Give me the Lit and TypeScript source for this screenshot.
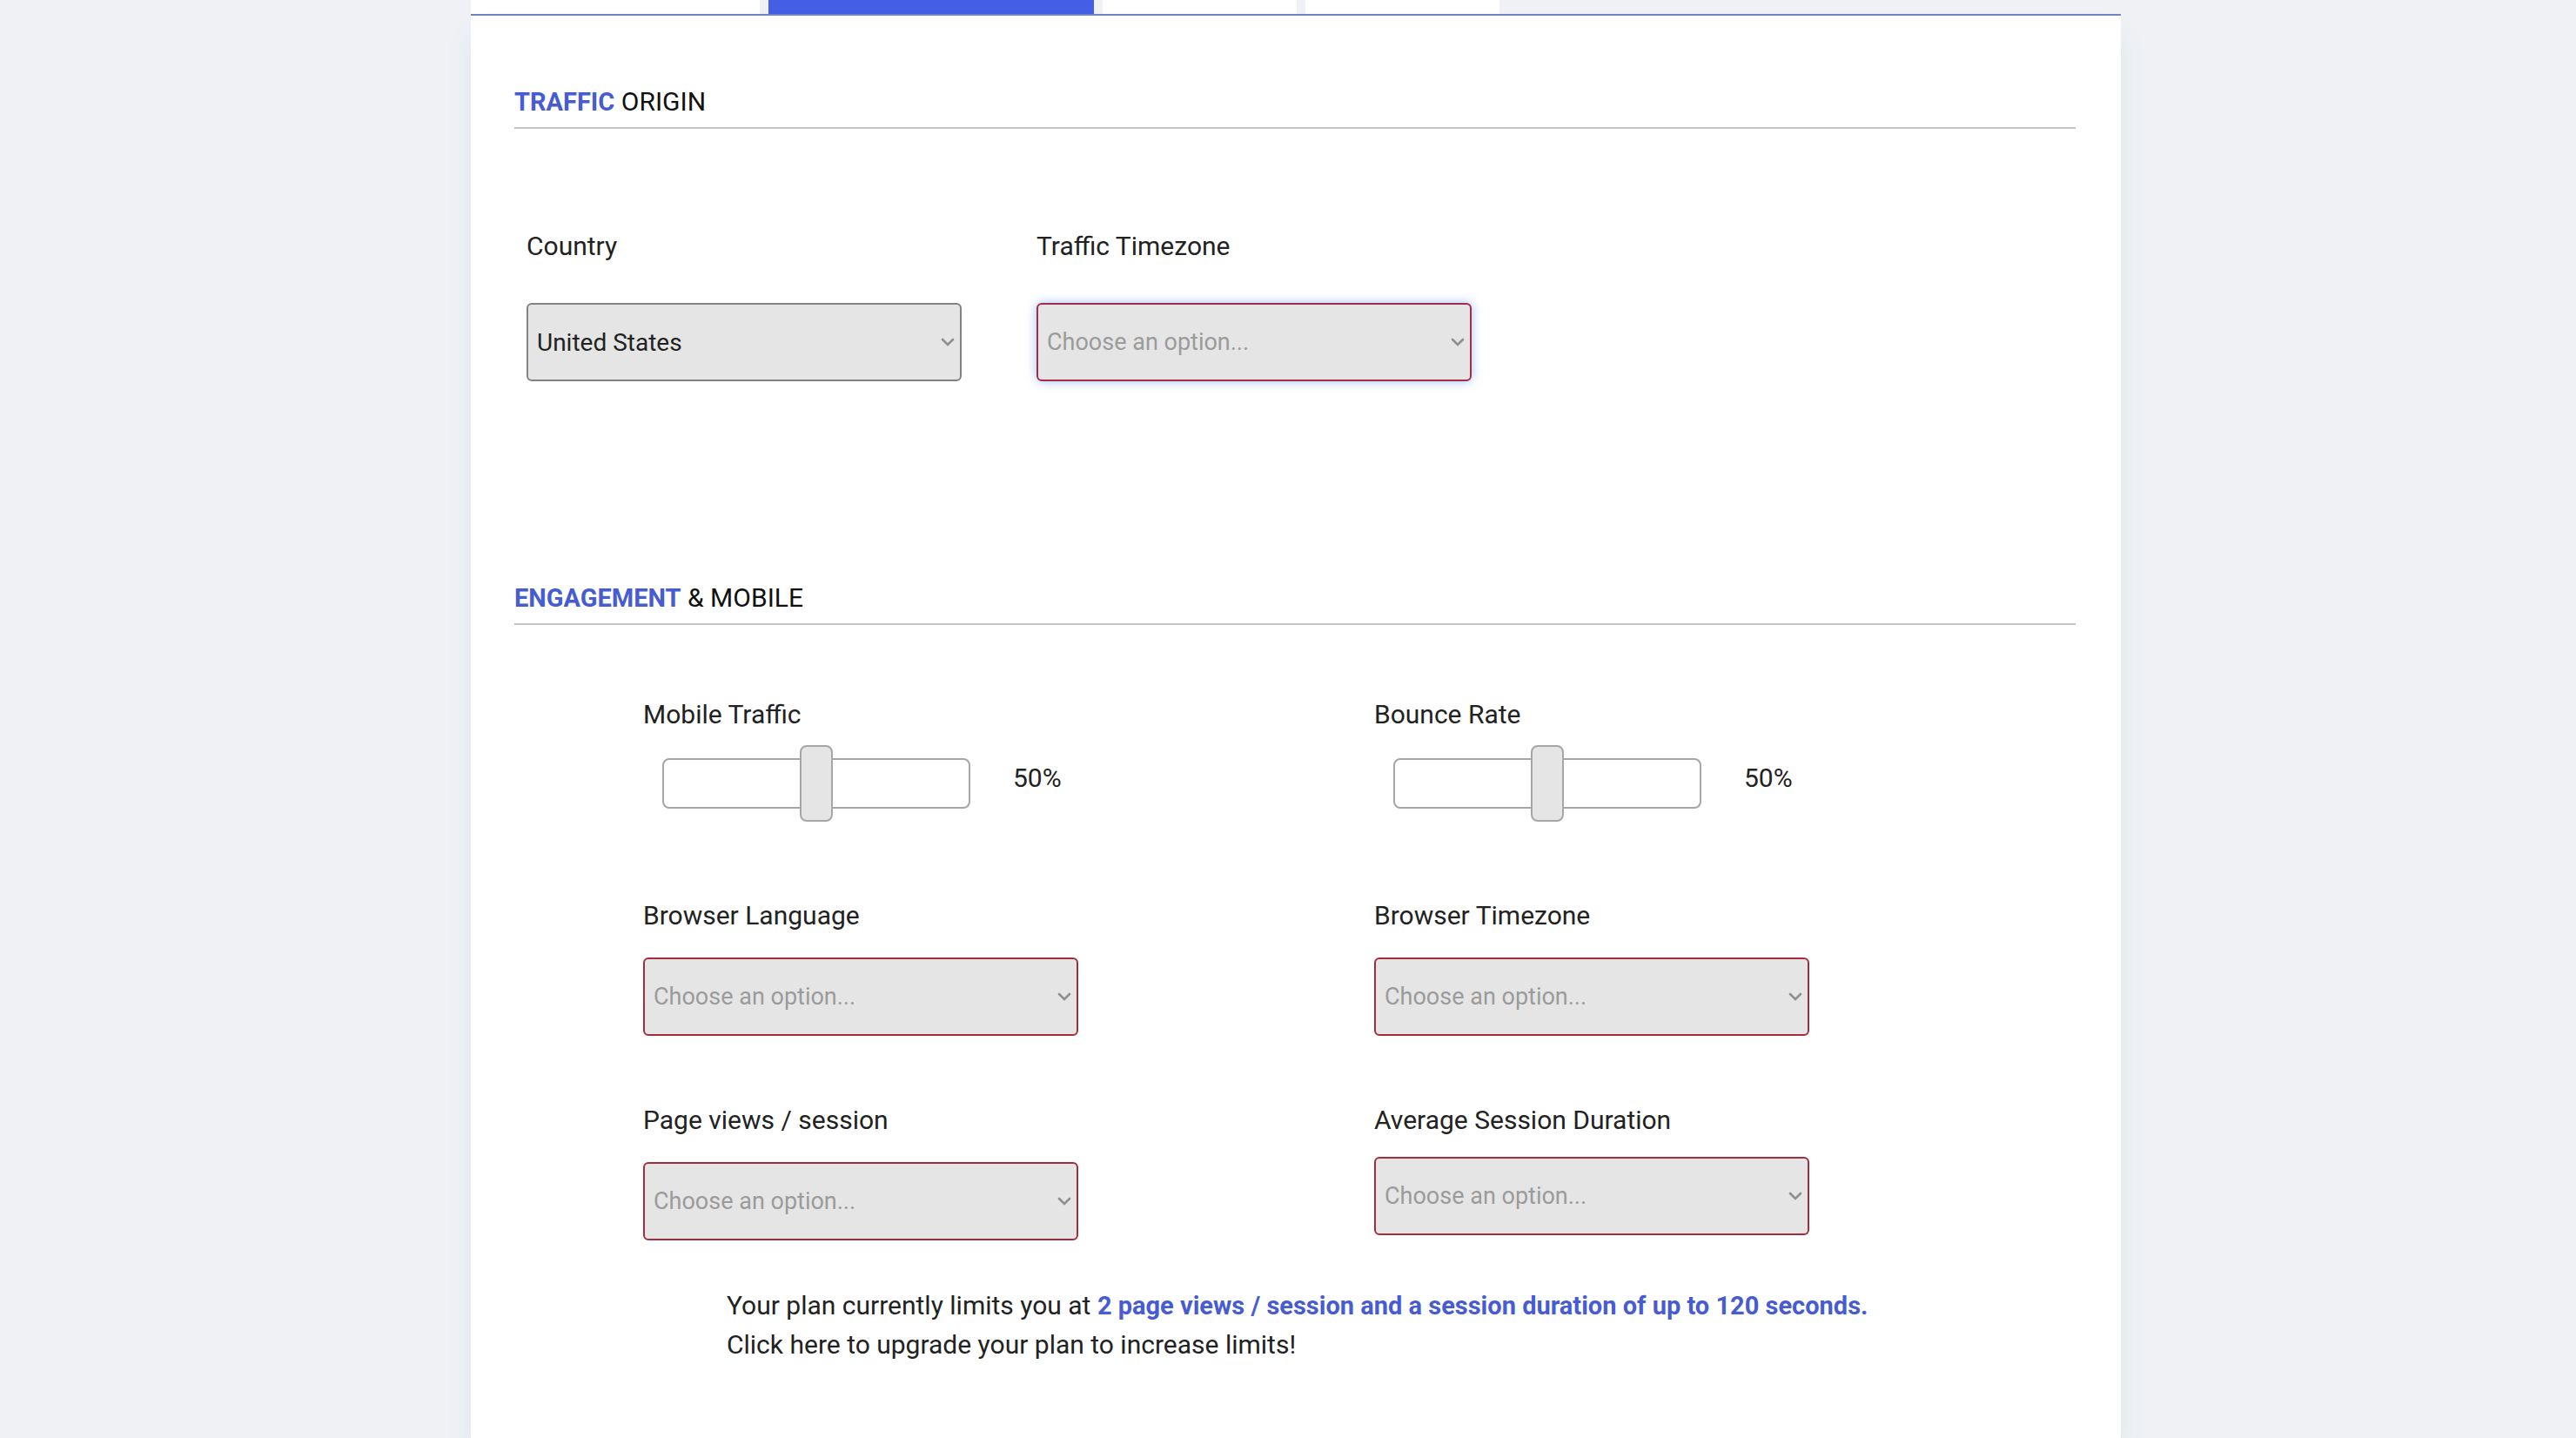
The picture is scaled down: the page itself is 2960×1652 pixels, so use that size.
import { LitElement, html, css } from "lit";
import { customElement, property, state } from "lit/decorators.js";
import { classMap } from "lit/directives/class-map.js";

@customElement("select-field")
export class SelectField extends LitElement {
  @property() label = "";
  @property() value = "";
  @property({ type: Boolean }) active = false;

  static styles = css`
    :host {
      --label-gap: 26px;
      display: flex;
      flex-direction: column;
      gap: var(--label-gap);
      min-width: 0;
    }
    .label {
      line-height: 45px;
    }
    .box {
      display: grid;
      align-items: center;
    }
    .control,
    .chevron {
      grid-area: 1 / 1;
    }
    .control {
      appearance: none;
      box-sizing: border-box;
      width: 100%;
      height: 90px;
      margin: 0;
      padding: 0 40px 0 10px;
      border: 2px solid #828282;
      border-radius: 6px;
      outline: none;
      background: #e5e5e5;
      color: #222;
      font-family: inherit;
      font-size: 28px;
    }
    .empty {
      border-color: #a42c3e;
      color: #9b9b9b;
      font-size: 27px;
    }
    .active {
      border-color: #a42c4a;
      box-shadow: 0 0 12px rgba(60, 130, 240, 0.5);
    }
    .chevron {
      justify-self: end;
      width: 16px;
      height: 12px;
      margin-right: 8px;
      pointer-events: none;
    }
  `;

  render() {
    const empty = this.value === "";
    return html`
      <label class="label" for="control">${this.label}</label>
      <div class="box">
        <select
          id="control"
          class=${classMap({ control: true, empty, active: this.active })}
        >
          <option>${empty ? "Choose an option..." : this.value}</option>
        </select>
        <svg class="chevron" viewBox="0 0 16 12" aria-hidden="true">
          <path
            d="M2 3 L8 9 L14 3"
            fill="none"
            stroke="#8f8f8f"
            stroke-width="2.6"
            stroke-linecap="round"
          />
        </svg>
      </div>
    `;
  }
}

@customElement("slider-field")
export class SliderField extends LitElement {
  @property() label = "";
  @state() private amount = 50;

  static styles = css`
    :host {
      display: flex;
      flex-direction: column;
      gap: 28px;
      min-width: 0;
    }
    .label,
    .amount {
      line-height: 45px;
    }
    .row {
      display: flex;
      align-items: flex-start;
      gap: 49px;
      padding-left: 22px;
    }
    .range {
      appearance: none;
      display: block;
      box-sizing: border-box;
      width: 354px;
      height: 58px;
      margin: 0;
      border: 2px solid #a6a6a6;
      border-radius: 8px;
      background: #fff;
    }
    .range::-webkit-slider-thumb {
      appearance: none;
      box-sizing: border-box;
      width: 38px;
      height: 88px;
      border: 2px solid #a6a6a6;
      border-radius: 8px;
      background: #e5e5e5;
    }
  `;

  private onInput(e: Event) {
    this.amount = Number((e.target as HTMLInputElement).value);
  }

  render() {
    return html`
      <label class="label" for="range">${this.label}</label>
      <div class="row">
        <input
          id="range"
          class="range"
          type="range"
          min="0"
          max="100"
          .value=${String(this.amount)}
          @input=${this.onInput}
        />
        <output class="amount" for="range">${this.amount}%</output>
      </div>
    `;
  }
}

@customElement("app-root")
export class AppRoot extends LitElement {
  @state() private step = 2;

  static styles = css`
    :host {
      display: block;
      font-family: Roboto, "Liberation Sans", sans-serif;
      font-size: 30px;
      color: #222;
    }
    .page {
      display: flex;
      flex-direction: column;
      box-sizing: border-box;
      min-height: 100vh;
      padding-left: 18px;
      background: #eff1f5;
    }
    .tabs,
    .panel {
      box-sizing: border-box;
      width: 100%;
      max-width: 1896px;
      margin: 0 auto;
    }
    .tabs {
      display: flex;
      gap: 10px;
      border-bottom: 2px solid #7083c4;
    }
    .tab {
      height: 16px;
      padding: 0;
      border: 0;
      background: #fff;
    }
    .large {
      flex: 0 1 332px;
    }
    .wide {
      flex: 0 1 374px;
    }
    .small {
      flex: 0 1 223px;
    }
    .current {
      background: #455ee6;
    }
    .panel {
      flex: 1;
      padding: 76px 52px 84px 50px;
      background: #fff;
      box-shadow: 0 20px 30px rgba(60, 120, 120, 0.07);
    }
    .heading {
      margin: 0;
      padding-bottom: 7px;
      border-bottom: 2px solid #c1c4c4;
      color: #111;
      font-size: 30px;
      font-weight: 400;
      line-height: 45px;
    }
    .strong {
      color: #475cd0;
      font-size: 29px;
      font-weight: 700;
      line-height: 1;
    }
    .fields {
      display: grid;
      grid-template-columns: repeat(2, minmax(0, 500px));
      align-items: start;
    }
    .origin {
      gap: 86px;
      padding: 112px 0 226px 14px;
    }
    .origin select-field {
      --label-gap: 43px;
    }
    .engagement {
      column-gap: 340px;
      padding: 80px 0 52px 148px;
    }
    .engagement slider-field {
      margin-bottom: 100px;
    }
    .spaced {
      margin-bottom: 74px;
    }
    .compact {
      --label-gap: 20px;
    }
    .note {
      margin: 0;
      padding-left: 244px;
      line-height: 45px;
    }
    .upgrade {
      color: inherit;
      text-decoration: none;
    }
  `;

  private tab(index: number, size: string) {
    return html`<button
      class=${classMap({ tab: true, [size]: true, current: this.step === index })}
      type="button"
      aria-label=${`Step ${index}`}
      @click=${() => (this.step = index)}
    ></button>`;
  }

  render() {
    return html`
      <div class="page">
        <nav class="tabs">
          ${this.tab(1, "large")} ${this.tab(2, "wide")} ${this.tab(3, "small")}
          ${this.tab(4, "small")}
        </nav>
        <main class="panel">
          <h2 class="heading"><span class="strong">TRAFFIC</span> ORIGIN</h2>
          <div class="fields origin">
            <select-field label="Country" value="United States"></select-field>
            <select-field label="Traffic Timezone" active></select-field>
          </div>
          <h2 class="heading">
            <span class="strong">ENGAGEMENT</span> &amp; MOBILE
          </h2>
          <div class="fields engagement">
            <slider-field label="Mobile Traffic"></slider-field>
            <slider-field label="Bounce Rate"></slider-field>
            <select-field class="spaced" label="Browser Language"></select-field>
            <select-field class="spaced" label="Browser Timezone"></select-field>
            <select-field label="Page views / session"></select-field>
            <select-field
              class="compact"
              label="Average Session Duration"
            ></select-field>
          </div>
          <p class="note">
            Your plan currently limits you at
            <span class="strong"
              >2 page views / session and a session duration of up to 120
              seconds.</span
            ><br />
            <a class="upgrade" href="#upgrade"
              >Click here to upgrade your plan to increase limits!</a
            >
          </p>
        </main>
      </div>
    `;
  }
}
